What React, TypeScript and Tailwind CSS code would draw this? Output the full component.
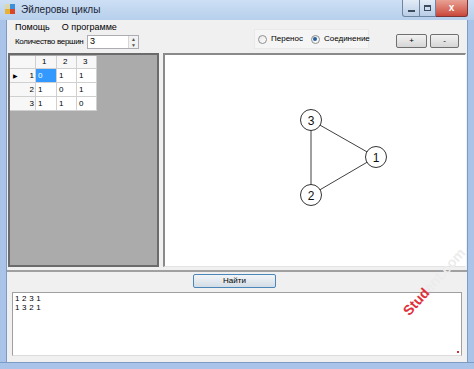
import React from "react";

const matrix = [
  ["0", "1", "1"],
  ["1", "0", "1"],
  ["1", "1", "0"],
];

function WinIcon() {
  return (
    <svg width="11" height="11" viewBox="0 0 11 11">
      <rect x="0" y="5" width="5" height="5" fill="#e8b233" />
      <rect x="5" y="5" width="5" height="5" fill="#d9472b" />
      <rect x="5" y="0" width="5" height="5" fill="#3d8fd9" />
      <rect x="0" y="0" width="5" height="5" fill="#f3d36a" opacity="0.5" />
    </svg>
  );
}

function Radio({ checked, label }: { checked?: boolean; label: string }) {
  return (
    <div className="flex items-center gap-[4px]">
      <div className="w-[9px] h-[9px] rounded-full border border-[#8e8f8f] bg-gradient-to-br from-[#e6e6e6] to-[#ffffff] flex items-center justify-center">
        {checked && <div className="w-[4px] h-[4px] rounded-full bg-[#2a5f9e]" />}
      </div>
      <span className="text-[8px] leading-none">{label}</span>
    </div>
  );
}

function Graph() {
  const nodes = [
    { id: "1", x: 211, y: 102 },
    { id: "2", x: 146, y: 140 },
    { id: "3", x: 146, y: 65 },
  ];
  const edges = [
    [0, 1],
    [1, 2],
    [2, 0],
  ];
  return (
    <svg width="300" height="210" className="block">
      {edges.map(([a, b], i) => (
        <line
          key={i}
          x1={nodes[a].x}
          y1={nodes[a].y}
          x2={nodes[b].x}
          y2={nodes[b].y}
          stroke="#404040"
          strokeWidth="1"
        />
      ))}
      {nodes.map((n) => (
        <g key={n.id}>
          <circle cx={n.x} cy={n.y} r="10.5" fill="#fff" stroke="#333" strokeWidth="1" />
          <text
            x={n.x}
            y={n.y + 4.5}
            textAnchor="middle"
            fontSize="12"
            fontFamily="Liberation Sans, Arial, sans-serif"
            fill="#111"
          >
            {n.id}
          </text>
        </g>
      ))}
    </svg>
  );
}

export default function App() {
  return (
    <div className="w-[474px] h-[369px] flex flex-col bg-[#a9c4e8] font-['Liberation_Sans',Arial,sans-serif] text-black relative overflow-hidden">
      {/* title bar */}
      <div className="h-[20px] flex items-start bg-gradient-to-b from-[#cddff4] to-[#b7cfec]">
        <div className="flex items-center h-[19px] pl-[5px] gap-[5px]">
          <WinIcon />
          <span className="text-[10px] text-[#1b2533]">Эйлеровы циклы</span>
        </div>
        <div className="ml-auto mr-[6px] flex h-[17px]">
          <div className="w-[18px] border border-t-0 border-[#6d84a3] rounded-bl-[3px] bg-gradient-to-b from-[#e3ecf7] to-[#b9cde6] flex items-center justify-center">
            <div className="w-[7px] h-[2px] bg-[#3c4b60] mt-[5px]" />
          </div>
          <div className="w-[16px] border border-t-0 border-l-0 border-[#6d84a3] bg-gradient-to-b from-[#e3ecf7] to-[#b9cde6] flex items-center justify-center">
            <div className="w-[7px] h-[6px] border border-t-2 border-[#3c4b60]" />
          </div>
          <div className="w-[32px] border border-t-0 border-l-0 border-[#7a3434] rounded-br-[3px] bg-gradient-to-b from-[#e8a195] to-[#c9453a] flex items-center justify-center">
            <span className="text-[10px] font-bold text-white leading-none">x</span>
          </div>
        </div>
      </div>

      <div className="flex flex-1">
        <div className="w-[7px] border-r border-[#7d9cc4]" />
        {/* client area */}
        <div className="w-[460px] bg-[#f0f0f0] flex flex-col">
          {/* top area */}
          <div className="h-[33px] flex items-start">
            <div className="w-[247px] flex flex-col pl-[8px]">
              <div className="h-[14px] flex items-center gap-[12px] text-[9px] pt-[1px]">
                <span>Помощь</span>
                <span>О программе</span>
              </div>
              <div className="flex items-center h-[16px]">
                <span className="text-[8px] tracking-[-0.3px] w-[72px]">Количество вершин</span>
                <div className="w-[52px] h-[14px] bg-white border border-[#abadb3] flex items-center">
                  <span className="text-[9px] pl-[2px] flex-1">3</span>
                  <div className="w-[10px] h-full flex flex-col border-l border-[#d6d6d6] bg-[#f2f2f2]">
                    <div className="flex-1 flex items-center justify-center text-[5px] text-[#555] leading-none">▲</div>
                    <div className="flex-1 flex items-center justify-center text-[5px] text-[#555] leading-none">▼</div>
                  </div>
                </div>
              </div>
            </div>
            <div className="mt-[9px] w-[115px] h-[20px] bg-[#f5f5f5] border border-[#e9e9e9] flex items-center pl-[3px] gap-[8px]">
              <Radio label="Перенос" />
              <Radio checked label="Соединение" />
            </div>
            <div className="mt-[14px] ml-[27px] flex gap-[3px]">
              <div className="w-[31px] h-[14px] border border-[#707070] rounded-[2px] bg-gradient-to-b from-[#f2f2f2] to-[#d6d6d6] flex items-center justify-center text-[8px] leading-none">
                +
              </div>
              <div className="w-[29px] h-[14px] border border-[#707070] rounded-[2px] bg-gradient-to-b from-[#f2f2f2] to-[#d6d6d6] flex items-center justify-center text-[8px] leading-none">
                -
              </div>
            </div>
          </div>

          {/* middle */}
          <div className="h-[214px] flex gap-[4px] pl-[1px] pr-[1px]">
            <div className="w-[151px] bg-[#ababab] border-2 border-[#6b6b6b] pt-[1px]">
              <div className="grid grid-cols-[26px_21px_20px_20px] text-[8px] leading-none w-[87px]">
                <div className="h-[13px] bg-[#f7f7f7] border-r border-b border-[#d0d0d0]" />
                {["1", "2", "3"].map((h) => (
                  <div
                    key={h}
                    className="h-[13px] bg-[#f7f7f7] border-r border-b border-[#d0d0d0] flex items-center pl-[6px]"
                  >
                    {h}
                  </div>
                ))}
                {matrix.map((row, r) => (
                  <React.Fragment key={r}>
                    <div className="h-[14px] bg-[#f7f7f7] border-r border-b border-[#d0d0d0] flex items-center justify-between pl-[3px] pr-[1px]">
                      <span className="text-[6px]">{r === 0 ? "▶" : ""}</span>
                      <span>{r + 1}</span>
                    </div>
                    {row.map((v, c) => (
                      <div
                        key={c}
                        className={
                          r === 0 && c === 0
                            ? "h-[14px] bg-[#3399ff] text-white border-r border-b border-[#d0d0d0] flex items-center pl-[2px]"
                            : "h-[14px] bg-white border-r border-b border-[#d0d0d0] flex items-center pl-[2px]"
                        }
                      >
                        {v}
                      </div>
                    ))}
                  </React.Fragment>
                ))}
              </div>
            </div>
            <div className="flex-1 bg-white border-t-2 border-l-2 border-t-[#8a8a8a] border-l-[#8a8a8a] border-r border-b border-r-[#ffffff] border-b-[#e3e3e3] overflow-hidden">
              <Graph />
            </div>
          </div>

          {/* bottom panel */}
          <div className="flex-1 mt-[3px] border-t-2 border-[#a0a0a0] flex flex-col pt-[2px]">
            <div className="ml-[186px] w-[83px] h-[14px] rounded-[2px] border border-[#4a86b8] bg-gradient-to-b from-[#f1f5f8] to-[#d3dde6] flex items-center justify-center text-[8px] leading-none">
              Найти
            </div>
            <div className="mt-[4px] mx-[5px] h-[64px] bg-white border border-[#a0a0a0] border-b-[#dcdcdc] relative">
              <div className="text-[8px] leading-[9px] pl-[2px] pt-[1px] tracking-[0.2px]">
                <div>1 2 3 1</div>
                <div>1 3 2 1</div>
              </div>
              <div className="absolute right-[2px] bottom-[2px] w-[2px] h-[2px] bg-[#d03030]" />
            </div>
          </div>
        </div>
        <div className="w-[7px] border-l border-[#7d9cc4]" />
      </div>
      <div className="h-[7px] border-t border-[#7d9cc4]" />

      {/* watermark */}
      <div className="absolute left-[406px] top-[306px] text-[14px] font-bold leading-[15px] rotate-[-48deg] origin-left text-[#e0303a] whitespace-nowrap">
        Stud<span className="text-[#ececec]">ent.com</span>
      </div>
    </div>
  );
}
